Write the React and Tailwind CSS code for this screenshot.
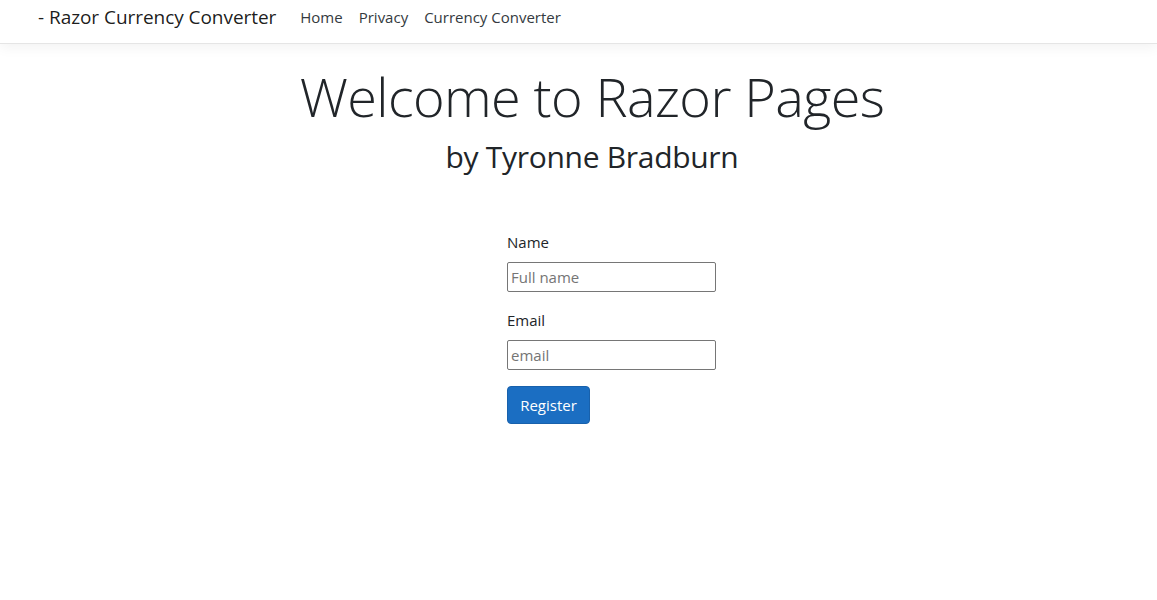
export default function App() {
  return (
    <div className="min-h-[600px] bg-white text-[#212529]" style={{ fontFamily: '"Open Sans", "Noto Sans", sans-serif' }}>
      <header className="h-[44px] border-b border-[#e5e5e5] bg-white shadow-[0_4px_12px_rgba(0,0,0,0.05)]">
        <nav className="flex items-center pl-[38px] pt-[4px]">
          <a className="mr-[24px] text-[19px] leading-[26px] text-black/90 tracking-[-0.05px]" href="#">- Razor Currency Converter</a>
          <ul className="flex items-center gap-[16px] text-[15px] leading-[26px] text-[#343a40]">
            <li><a href="#">Home</a></li>
            <li><a href="#">Privacy</a></li>
            <li><a href="#">Currency Converter</a></li>
          </ul>
        </nav>
      </header>

      <main className="pl-[27px]">
        <div className="pt-[20px] text-center">
          <h1 className="text-[54px] font-light leading-[1.2] tracking-[-0.6px]">Welcome to Razor Pages</h1>
          <h2 className="mt-[10px] text-[30px] leading-[1.2] tracking-[-0.3px]">by Tyronne Bradburn</h2>
        </div>
      </main>

      <form className="mt-[56px] flex w-[240px] flex-col pl-[507px] box-content" onSubmit={(e) => e.preventDefault()}>
        <label className="text-[15px] leading-[22px]" htmlFor="name">Name</label>
        <input
          id="name"
          className="mt-[9px] h-[30px] w-[209px] rounded-[2px] border border-[#767676] px-[3px] text-[15px] text-[#212529] placeholder:text-[#757575] outline-none"
          placeholder="Full name"
        />
        <label className="mt-[17px] text-[15px] leading-[22px]" htmlFor="email">Email</label>
        <input
          id="email"
          className="mt-[9px] h-[30px] w-[209px] rounded-[2px] border border-[#767676] px-[3px] text-[15px] text-[#212529] placeholder:text-[#757575] outline-none"
          placeholder="email"
        />
        <button
          type="submit"
          className="mt-[16px] h-[38px] w-[83px] rounded-[4px] border border-[#1861ac] bg-[#1b6ec2] text-[15px] text-white"
        >
          Register
        </button>
      </form>
    </div>
  )
}
